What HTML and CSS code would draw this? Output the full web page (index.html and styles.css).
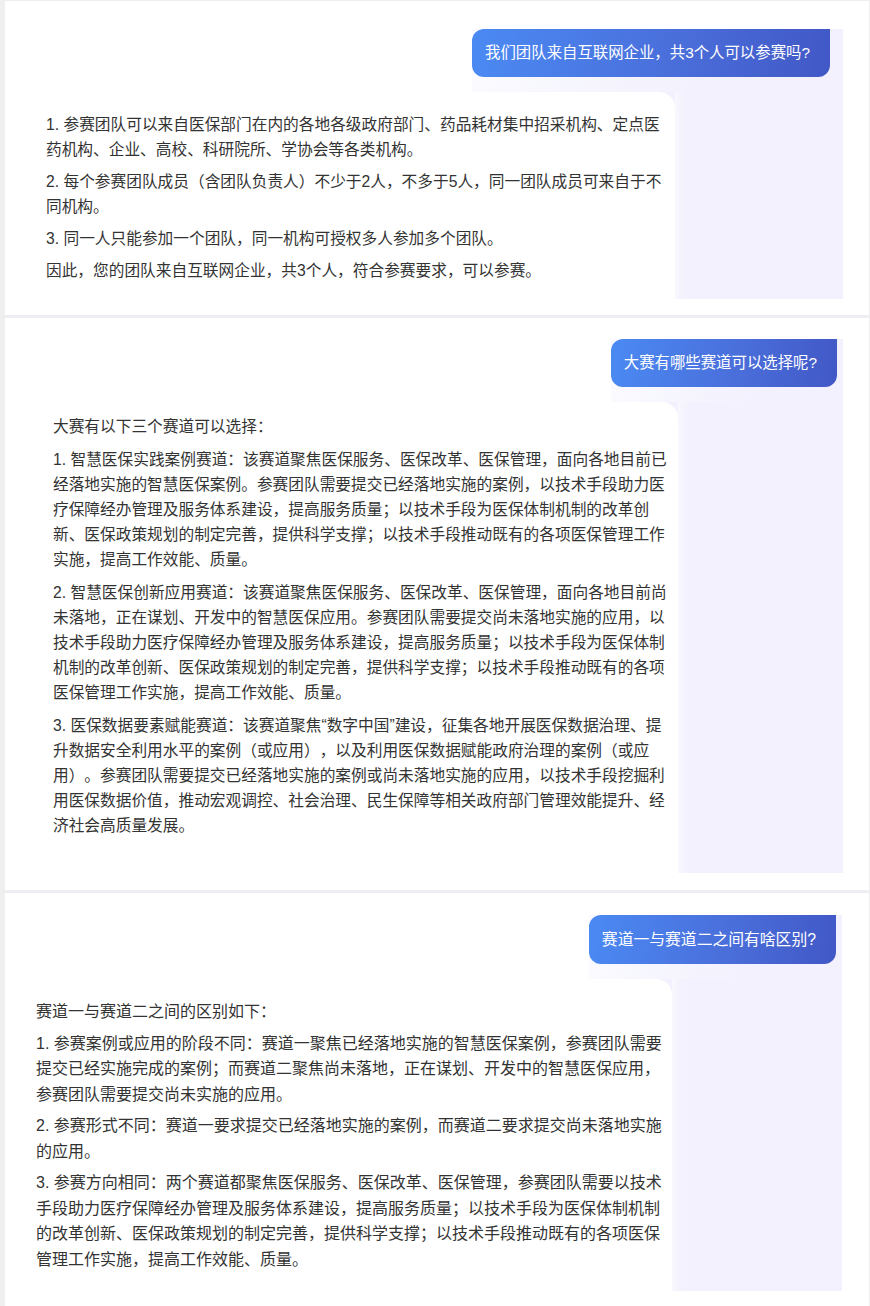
FILE: index.html
```
<!DOCTYPE html>
<html lang="zh-CN">
<head>
    <meta charset="UTF-8">
    <meta name="viewport" content="width=device-width, initial-scale=1.0">
    <title>大赛问答</title>
    <link rel="stylesheet" href="styles.css">
</head>
<body>

    <!-- Shot 1: team eligibility -->
    <div class="shot shot-one">
        <div class="chat">
            <div class="ask">
                <div class="ask-bubble">我们团队来自互联网企业，共3个人可以参赛吗?</div>
            </div>
            <div class="reply">
                <div class="reply-bubble">
                    <p>1. 参赛团队可以来自医保部门在内的各地各级政府部门、药品耗材集中招采机构、定点医药机构、企业、高校、科研院所、学协会等各类机构。</p>
                    <p>2. 每个参赛团队成员（含团队负责人）不少于2人，不多于5人，同一团队成员可来自于不同机构。</p>
                    <p>3. 同一人只能参加一个团队，同一机构可授权多人参加多个团队。</p>
                    <p>因此，您的团队来自互联网企业，共3个人，符合参赛要求，可以参赛。</p>
                </div>
                <div class="reply-side"></div>
            </div>
        </div>
    </div>

    <!-- Shot 2: tracks -->
    <div class="shot shot-two">
        <div class="chat">
            <div class="ask">
                <div class="ask-bubble">大赛有哪些赛道可以选择呢?</div>
            </div>
            <div class="reply">
                <div class="reply-bubble">
                    <p>大赛有以下三个赛道可以选择：</p>
                    <p>1. 智慧医保实践案例赛道：该赛道聚焦医保服务、医保改革、医保管理，面向各地目前已经落地实施的智慧医保案例。参赛团队需要提交已经落地实施的案例，以技术手段助力医疗保障经办管理及服务体系建设，提高服务质量；以技术手段为医保体制机制的改革创新、医保政策规划的制定完善，提供科学支撑；以技术手段推动既有的各项医保管理工作实施，提高工作效能、质量。</p>
                    <p>2. 智慧医保创新应用赛道：该赛道聚焦医保服务、医保改革、医保管理，面向各地目前尚未落地，正在谋划、开发中的智慧医保应用。参赛团队需要提交尚未落地实施的应用，以技术手段助力医疗保障经办管理及服务体系建设，提高服务质量；以技术手段为医保体制机制的改革创新、医保政策规划的制定完善，提供科学支撑；以技术手段推动既有的各项医保管理工作实施，提高工作效能、质量。</p>
                    <p>3. 医保数据要素赋能赛道：该赛道聚焦“数字中国”建设，征集各地开展医保数据治理、提升数据安全利用水平的案例（或应用），以及利用医保数据赋能政府治理的案例（或应用）。参赛团队需要提交已经落地实施的案例或尚未落地实施的应用，以技术手段挖掘利用医保数据价值，推动宏观调控、社会治理、民生保障等相关政府部门管理效能提升、经济社会高质量发展。</p>
                </div>
                <div class="reply-side"></div>
            </div>
        </div>
    </div>

    <!-- Shot 3: track differences -->
    <div class="shot shot-three">
        <div class="chat">
            <div class="ask">
                <div class="ask-bubble">赛道一与赛道二之间有啥区别?</div>
            </div>
            <div class="reply">
                <div class="reply-bubble">
                    <p>赛道一与赛道二之间的区别如下：</p>
                    <p>1. 参赛案例或应用的阶段不同：赛道一聚焦已经落地实施的智慧医保案例，参赛团队需要提交已经实施完成的案例；而赛道二聚焦尚未落地，正在谋划、开发中的智慧医保应用，参赛团队需要提交尚未实施的应用。</p>
                    <p>2. 参赛形式不同：赛道一要求提交已经落地实施的案例，而赛道二要求提交尚未落地实施的应用。</p>
                    <p>3. 参赛方向相同：两个赛道都聚焦医保服务、医保改革、医保管理，参赛团队需要以技术手段助力医疗保障经办管理及服务体系建设，提高服务质量；以技术手段为医保体制机制的改革创新、医保政策规划的制定完善，提供科学支撑；以技术手段推动既有的各项医保管理工作实施，提高工作效能、质量。</p>
                </div>
                <div class="reply-side"></div>
            </div>
        </div>
    </div>

</body>
</html>
```

FILE: styles.css
```
body {
    margin: 0;
    background: #fff;
    font-family: "Liberation Sans", "Noto Sans CJK SC", sans-serif;
    color: #333;
}

/* each screenshot panel */
.shot {
    border-left: 5px solid #efefef;
    border-right: 1px solid #efefef;
    border-bottom: 3px solid #eceef1;
}

.shot-one {
    border-top: 1px solid #eeeeee;
    padding: 28px 0 16px;
    --ask-pad: 13px;
    --ask-v: 12px;
    --side: 168px;
    --reply-pad: 20px 0 16px 41px;
    --ask-size: 15.4px;
    --text-size: 15.7px;
    --line: 25px;
    --gap: 7px;
}

.shot-two {
    padding: 21px 0 17px;
    --ask-pad: 6px;
    --ask-v: 12px;
    --side: 165px;
    --reply-pad: 12px 0 35px 48px;
    --ask-size: 15.4px;
    --text-size: 15.7px;
    --line: 25px;
    --gap: 8px;
}

.shot-three {
    border-bottom: none;
    padding: 22px 0 16px;
    --ask-pad: 6px;
    --ask-v: 12.5px;
    --side: 170px;
    --reply-pad: 20px 0 19px 31px;
    --ask-size: 15.8px;
    --text-size: 16px;
    --line: 25.5px;
    --gap: 6px;
}

.shot-three .chat {
    margin-right: 27px;
}

.chat {
    display: flex;
    flex-direction: column;
    align-items: flex-end;
    margin-right: 26px;
}

/* question row, lavender shows right of and below the bubble */
.ask {
    padding: 0 var(--ask-pad) 15px 0;
    background: linear-gradient(90deg, #fafaff, #f2f1fd 60%);
}

.ask-bubble {
    background: linear-gradient(100deg, #4b8af3 0%, #4a6fdb 55%, #4158c6 100%);
    color: #fff;
    font-size: var(--ask-size);
    line-height: 24px;
    padding: var(--ask-v) 20px var(--ask-v) 13px;
    border-radius: 12px 0 12px 12px;
}

.reply {
    align-self: stretch;
    display: flex;
    background: #f2f1fd;
}

.reply-bubble {
    flex: 1;
    background: #fff;
    border-radius: 0 16px 0 0;
    padding: var(--reply-pad);
    font-size: var(--text-size);
    line-height: var(--line);
    text-spacing-trim: space-all;
}

.reply-bubble p {
    margin: 0 0 var(--gap);
    width: 39.5em;
}

.reply-bubble p:last-child {
    margin-bottom: 0;
}

.reply-side {
    width: var(--side);
    background: linear-gradient(90deg, #f9f8fe, #f2f1fd 10px);
}
```
